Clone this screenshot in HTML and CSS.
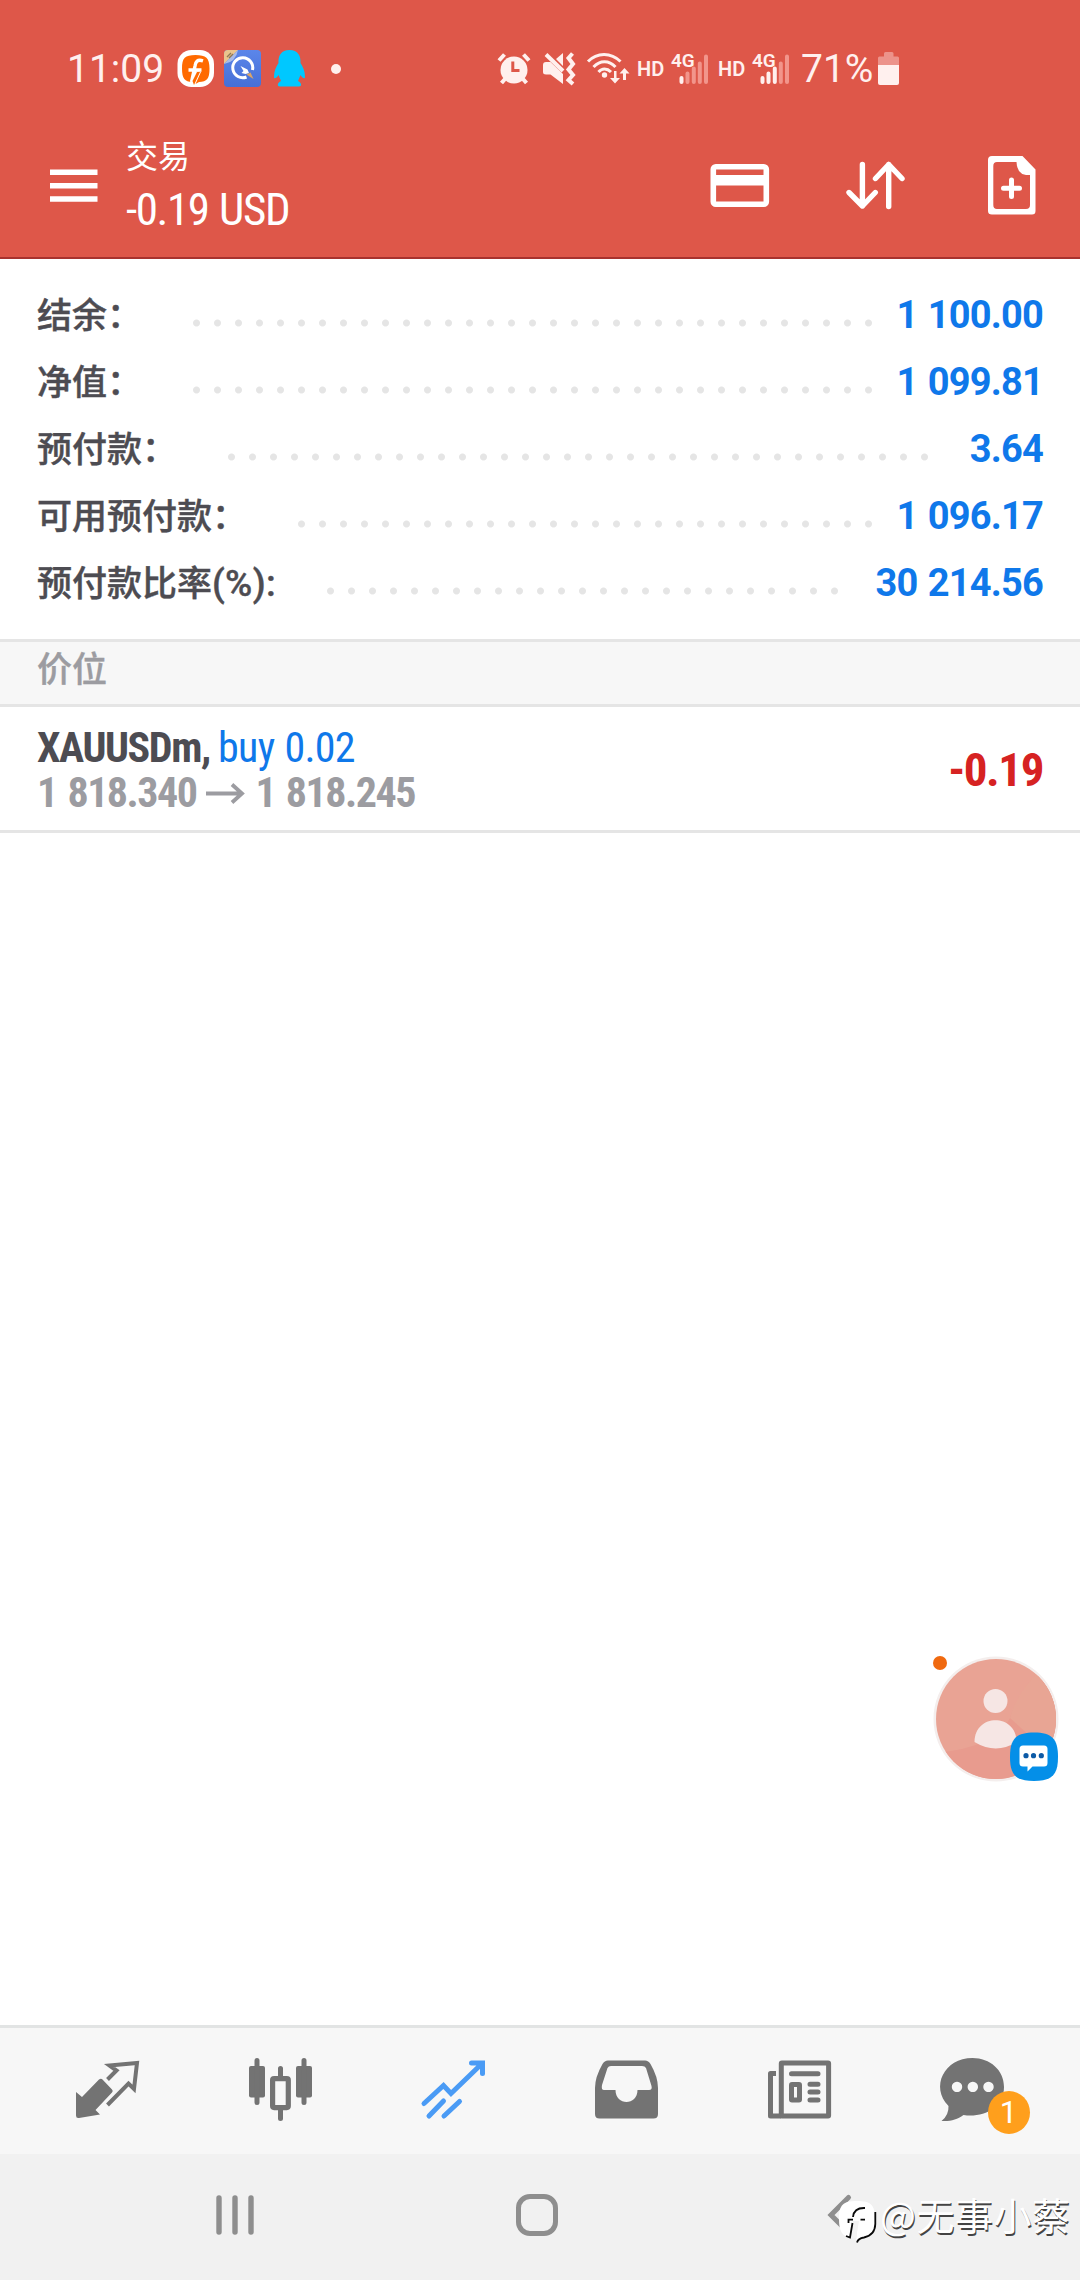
FILE: index.html
```html
<!DOCTYPE html>
<html lang="zh-CN">
<head>
<meta charset="utf-8">
<title>交易</title>
<link rel="stylesheet" href="styles.css">
</head>
<body>
<div class="screen">
  <div class="status">
    <span class="status-time">11:09</span>
    <svg class="st-follow" width="36" height="38" viewBox="178 50 36 38"><rect x="177.500" y="50" width="36.500" height="37" rx="14" fill="#fff"/><path d="M195.500 55C185 55 182 58 182 68.500S185 81.500 192 82L195 71L201 72L195.500 84L199 82C207 81.500 209.500 79 209.500 68.500S206 55 195.500 55Z" fill="#ff6a00"/><path d="M203 60.800C197.500 59 195.500 61.500 195 66L191.500 82M188.500 70H201.500" fill="none" stroke="#fff" stroke-width="3.400"/><path d="M197 72H200L194 85L192.500 81Z" fill="#ff6a00"/></svg>
    <svg class="st-search" width="37" height="37" viewBox="224 50 37 37"><defs><linearGradient id="g1" x2="0" y2="1"><stop stop-color="#5b86ea"/><stop offset="1" stop-color="#466fd6"/></linearGradient></defs><rect x="224" y="50" width="37" height="37" rx="4" fill="url(#g1)"/><path d="M224 64V54Q224 50 228 50H238Z" fill="#eac48c"/><path d="M224 64L238 50Q236 62 224 64Z" fill="#a9bbe8"/><path d="M227 57L231 53M229 58L233 54" stroke="#8f7855" stroke-width="1.300"/><path d="M246.500 77A10 10 0 1 1 252.500 70" fill="none" stroke="#fff" stroke-width="3"/><path d="M240.500 66L247.500 69.500L249 73L245.500 74L241.500 73L243.500 71Z" fill="#fff"/><path d="M246.500 74.500L250.500 72.500L253.500 79Z" fill="#dca566"/></svg>
    <svg class="st-qq" width="34" height="38" viewBox="273 50 34 38"><path d="M289.500 50C281 50 278 56 278.500 63C276 67 274 71 274 77C274 79 276 79 278.500 75L281 81C277 83 277 86.500 280 86.500H299C302 86.500 302 83 298 81L300.500 75C303 79 305 79 305 77C305 71 303 67 300.500 63C301 56 298 50 289.500 50Z" fill="#00c8ff"/></svg>
    <span class="st-dot"></span>
    <svg class="st-alarm" width="36" height="34" viewBox="496 52 36 34"><circle cx="514" cy="70" r="13.500" class="sf"/><path d="M499 60.500L504.500 54.500M529 60.500L523.500 54.500M505 79L501.500 83M523 79L526.500 83" class="ss"/><path d="M512.800 61.500V70.500H519.500" fill="none" stroke="#de5749" stroke-width="3"/></svg>
    <svg class="st-mute" width="34" height="34" viewBox="542 52 34 34"><path d="M543 65Q543 62 546 62H550.500L563 74V84L550.500 74.500H546Q543 74.500 543 72ZM556 59L563 53V66Z" class="sf"/><path d="M546 54.500L563 71" class="ss"/><path d="M572.500 53.500L568.500 58L573 64L568.500 69.500L573 75L568.500 80L573 84" class="ss"/></svg>
    <svg class="st-wifi" width="43" height="34" viewBox="587 52 43 34"><path d="M588 61.500C597 52 611 52 620.500 61.500M593.500 67C600 60 609 60 615.500 67M598.500 72C602 68 607 68 611 72" fill="none" stroke="#fff0ee" stroke-width="3"/><circle cx="604.500" cy="75" r="2.700" class="sf"/><path d="M614 71V78H610L615 83.500L620 78H616.500V71ZM623 80V73.500H619.500L624.500 68L629.500 73.500H626V80Z" class="sf"/></svg>
    <span class="hd hd-a">HD</span>
    <span class="signal sig-a"><span class="gen">4G</span><svg width="38" height="34" viewBox="671 52 38 34"><path d="M681.500 78V82" class="bar"/><path d="M687.500 73.500V82M693.800 68.500V82M699.800 63.500V82M706 56.500V82" class="bar dim"/></svg></span>
    <span class="hd hd-b">HD</span>
    <span class="signal sig-b"><span class="gen">4G</span><svg width="38" height="34" viewBox="671 52 38 34"><path d="M681.500 78V82M687.500 73.500V82M693.800 68.500V82" class="bar"/><path d="M699.800 63.500V82M706 56.500V82" class="bar dim"/></svg></span>
    <span class="pct">71%</span>
    <svg class="st-batt" width="21" height="33" viewBox="879 51 21 33"><path d="M879 64V57Q879 55.500 880.500 55.500H885V52.500Q885 51 886.500 51H893Q894.500 51 894.500 52.500V55.500H898.500Q900 55.500 900 57V64Z" fill="#ec938b"/><path d="M879 64H900V82Q900 84 898 84H881Q879 84 879 82Z" class="sf"/></svg>
  </div>

  <header class="appbar">
    <svg class="menu" width="48" height="34" viewBox="50 169 48 34"><path d="M50 172.300H97.500M50 185.800H97.500M50 199H97.500" stroke="#fff" stroke-width="5.600"/></svg>
    <div class="heading"><div class="title">交易</div><div class="total">-0.19 USD</div></div>
    <svg class="ab-card" width="60" height="44" viewBox="710 164 60 44"><rect x="713.300" y="166.800" width="53" height="37.500" rx="2.500" fill="none" stroke="#fff" stroke-width="5.600"/><path d="M713 180.300H767" stroke="#fff" stroke-width="10.500"/></svg>
    <svg class="ab-sort" width="60" height="50" viewBox="846 161 60 50"><path d="M862.400 164.500V206M849 192.500L862.400 206L875.300 192.500M888.700 206.500V164.500M875.500 178.500L888.700 164.500L902 178.500" fill="none" stroke="#fff" stroke-width="5.400" stroke-linecap="round" stroke-linejoin="round"/></svg>
    <svg class="ab-doc" width="48" height="59" viewBox="988 156 48 59"><path fill-rule="evenodd" d="M992 156H1022.500L1035.500 169.500V211Q1035.500 214.500 1032 214.500H992Q988 214.500 988 211V160Q988 156 992 156ZM997 162Q993.300 162 993.300 166V205Q993.300 209 997 209H1026Q1030 209 1030 205V175H1026Q1017 174 1016.500 162Z" fill="#fff"/><path d="M1003.500 188.200H1019.500M1011.500 180V196.500" stroke="#fff" stroke-width="5" stroke-linecap="round"/></svg>
  </header>

  <section class="summary">
    <div class="row"><span class="label">结余：</span><i class="dots" style="--n:33"></i><span class="value">1 100.00</span></div>
    <div class="row"><span class="label">净值：</span><i class="dots" style="--n:33"></i><span class="value">1 099.81</span></div>
    <div class="row"><span class="label">预付款：</span><i class="dots" style="--n:34"></i><span class="value">3.64</span></div>
    <div class="row"><span class="label">可用预付款：</span><i class="dots" style="--n:28"></i><span class="value">1 096.17</span></div>
    <div class="row"><span class="label">预付款比率<span class="latin">(%):</span></span><i class="dots" style="--n:25"></i><span class="value">30 214.56</span></div>
  </section>

  <div class="section-head">价位</div>

  <div class="position">
    <div class="pos-main">
      <div class="symbol"><b>XAUUSDm,</b> <span class="side">buy 0.02</span></div>
      <div class="prices"><span>1 818.340</span><svg class="arrow" width="39" height="22" viewBox="207 780 39 22"><path d="M207 791.500H243M233 782.500L243 791.500L233 800.500" fill="none" stroke="#9c9ca1" stroke-width="3.800"/></svg><span>1 818.245</span></div>
    </div>
    <div class="profit">-0.19</div>
  </div>

  <main class="empty"></main>

  <nav class="tabs">
    <svg width="64" height="64" viewBox="76 2058 64 64"><path d="M76 2092L82 2097L99 2079.500Q101 2078 102.500 2079.500L112 2089.500Q113.500 2091 112 2092.500L95.500 2110L100 2114.500L79 2118Q76 2118.500 76 2115.500Z" class="g"/><path d="M107.500 2079.500L116.500 2070.500L109.500 2065.500L137 2063L134 2089L128.500 2083.500L107.500 2105" fill="none" stroke="#737373" stroke-width="4"/></svg>
    <svg width="64" height="64" viewBox="249 2058 64 64"><rect x="249" y="2066" width="16" height="31.500" rx="2" class="g"/><rect x="296" y="2066" width="16" height="31.500" rx="2" class="g"/><path d="M257 2060.500V2102.500M304 2060.500V2102.500M280.500 2068.500V2078M280.500 2110V2118.500" stroke="#737373" stroke-width="5" stroke-linecap="round"/><rect x="272.600" y="2078.600" width="15.700" height="29" rx="1.500" fill="none" stroke="#737373" stroke-width="5.200"/></svg>
    <svg width="64" height="64" viewBox="422 2058 64 64"><path d="M424 2103.500L443.500 2085.500L451 2093.500L481 2064.500M471.500 2063H482.500V2073.500M443.500 2101L429 2116M459.500 2101.500L444 2116" fill="none" stroke="#4a9bf5" stroke-width="5" stroke-linecap="round"/><path d="M475 2061H485V2071Z" fill="#4a9bf5"/></svg>
    <svg width="64" height="64" viewBox="595 2058 64 64"><path fill-rule="evenodd" d="M608 2060.500H645Q648.500 2060.500 650.500 2064Q658 2077 658 2088V2114Q658 2118.500 653.500 2118.500H599.500Q595 2118.500 595 2114V2088Q595 2077 602.500 2064Q604.500 2060.500 608 2060.500ZM611 2066Q608.500 2066 607.500 2068L602 2085Q601 2090 604 2090H615.500C615.500 2106 637.500 2106 637.500 2090H649Q652.500 2090 651.500 2086L646 2068Q645 2066 642 2066Z" class="g"/></svg>
    <svg width="64" height="64" viewBox="768 2058 64 64"><rect x="781.300" y="2063" width="47.300" height="53" rx=".500" fill="none" stroke="#737373" stroke-width="5"/><path d="M776 2073.500H770.500V2116H781" fill="none" stroke="#737373" stroke-width="5" stroke-linejoin="round"/><path d="M791.500 2073.700H818M810 2084.200H818M810 2092H818M810 2100H818" stroke="#737373" stroke-width="5" stroke-linecap="round"/><rect x="791.500" y="2084.500" width="8" height="15.500" rx=".500" fill="none" stroke="#737373" stroke-width="5"/></svg>
    <div class="chat">
      <svg width="64" height="64" viewBox="941 2058 64 64"><path fill-rule="evenodd" d="M972.500 2058C990 2058 1004 2070 1004 2087C1004 2108 983 2118 963.500 2115C957 2119.500 951 2121.500 941.500 2121Q949 2115 948.500 2106C930 2087 944 2058 972.500 2058ZM957 2081.700a5.200 5.200 0 1 0 .01 0ZM972.800 2081.700a5.200 5.200 0 1 0 .01 0ZM988.500 2081.700a5.200 5.200 0 1 0 .01 0Z" class="g"/></svg>
      <span class="badge">1</span>
    </div>
  </nav>

  <div class="sysnav">
    <svg class="recents" width="38" height="40" viewBox="216 2195 38 40"><path d="M219 2198V2232M235 2198V2232M251 2198V2232" stroke="#8e8e8e" stroke-width="5.400" stroke-linecap="round"/></svg>
    <span class="home"></span>
    <svg class="back" width="24" height="42" viewBox="828 2194 24 42"><path d="M848.500 2197.500L831 2215L848.500 2232.500" fill="none" stroke="#8e8e8e" stroke-width="5" stroke-linecap="round"/></svg>
  </div>

  <div class="bubble">
    <svg width="124" height="132" viewBox="934 1654 124 132"><defs><clipPath id="av"><circle cx="996" cy="1719" r="60"/></clipPath></defs><circle cx="996" cy="1719" r="62.500" fill="#f4eeed"/><g clip-path="url(#av)"><rect x="934" y="1656" width="124" height="126" fill="#e9a394"/><path d="M1058 1660Q1018 1690 1010 1718Q996 1748 934 1753V1790H1058Z" fill="#e89b8e"/><path d="M1058 1656Q1018 1685 1010 1718L1040 1745H1058Z" fill="#e8a594"/></g><circle cx="995.500" cy="1701" r="12" fill="#f6e6e4"/><path d="M974.500 1742C974.500 1713 1016.500 1713 1016.500 1742Q996 1755 974.500 1742Z" fill="#f6e6e4"/><circle cx="940" cy="1663" r="7" fill="#f0690f"/><path d="M1034 1732.500C1052 1732.500 1058 1739 1058 1757S1052 1781 1034 1781S1010 1775 1010 1757S1016 1732.500 1034 1732.500Z" fill="#048fe8"/><path d="M1023 1745.500H1044Q1047.500 1745.500 1047.500 1749V1763Q1047.500 1766.500 1044 1766.500H1032.500L1027.500 1771.500V1766.500H1023Q1019.500 1766.500 1019.500 1763V1749Q1019.500 1745.500 1023 1745.500Z" fill="#fff"/><g fill="#0c5aa6"><circle cx="1026" cy="1755.700" r="2.600"/><circle cx="1033.500" cy="1755.700" r="2.600"/><circle cx="1041.300" cy="1755.700" r="2.600"/></g></svg>
  </div>

  <div class="watermark">
    <svg width="40" height="46" viewBox="837 2199 40 46"><path d="M857 2201C843 2201 839 2205 839 2219C839 2231 842 2236 850 2237.500L853 2221H858L856 2243C858 2239 861 2238 864 2237.500C872 2236 875 2231 875 2219C875 2205 871 2201 857 2201Z" fill="#fff"/><path d="M853 2221H859L856 2238L850 2237.500Z" fill="#f4f4f4"/><path d="M853 2217Q854 2207.500 865 2208M848.500 2223V2219.700H853M860.500 2219.700H865M852.500 2223L850 2237.500L846 2236M875.300 2212V2224Q875 2235 864 2237.500Q858 2238.500 857 2242.500" fill="none" stroke="#0a0a0a" stroke-width="1.800"/></svg>
    <span>@无事小蔡</span>
  </div>
</div>
</body>
</html>
```
FILE: styles.css
```css
* { box-sizing: border-box; }
body {
  margin: 0;
  font-family: Roboto, "Noto Sans CJK SC", sans-serif;
  background: #fff;
}
svg { display: block; flex: none; overflow: visible; }
.screen {
  position: relative;
  width: 1080px;
  height: 2280px;
  display: flex;
  flex-direction: column;
  overflow: hidden;
}

/* status bar */
.status {
  height: 118px;
  flex: none;
  padding: 19px 0 0 67px;
  display: flex;
  align-items: center;
  background: #de5749;
  color: #fff0ee;
  line-height: 46px;
  white-space: nowrap;
}
.status > * { flex: none; }
.status-time { width: 97px; font-size: 39px; font-weight: 400; }
.sf { fill: #fff0ee; }
.ss { fill: none; stroke: #fff0ee; stroke-width: 4; }
.st-follow { margin-left: 14px; }
.st-search { margin-left: 10px; }
.st-qq { margin-left: 12px; }
.st-dot { width: 10px; height: 10px; border-radius: 50%; background: #fff0ee; margin-left: 24px; }
.st-alarm { margin-left: 155px; }
.st-mute { margin-left: 10px; }
.st-wifi { margin-left: 11px; }
.hd { width: 27px; font-size: 20px; font-weight: 600; }
.hd-a { margin-left: 7px; }
.hd-b { margin-left: 9px; }
.signal { position: relative; }
.sig-a { margin-left: 7px; }
.sig-b { margin-left: 7px; }
.gen { position: absolute; left: 0; top: 0; font-size: 19px; font-weight: 600; line-height: 18px; }
.bar { stroke: #fff0ee; stroke-width: 4; stroke-linecap: round; }
.bar.dim { stroke: #f2958b; }
.pct { margin-left: 11px; width: 72px; font-size: 39px; font-weight: 400; }
.st-batt { margin-left: 5px; }

/* app bar */
.appbar {
  height: 141px;
  flex: none;
  display: flex;
  align-items: flex-start;
  padding-left: 50px;
  background: #de5749;
  border-bottom: 2px solid #a8322e;
  color: #fff;
}
.menu { margin-top: 51px; }
.heading { width: 181px; margin: 17px 0 0 28px; white-space: nowrap; }
.title { font-size: 32px; line-height: 44px; }
.total { font-size: 45px; line-height: 54px; margin-top: 4px; font-stretch: 75%; letter-spacing: -1.4px; word-spacing: 1.5px; }
.ab-card { margin: 46px 0 0 403px; }
.ab-sort { margin: 43px 0 0 76px; }
.ab-doc { margin: 38px 0 0 82px; }

/* account summary */
.summary {
  height: 380px;
  flex: none;
  padding: 22px 37px 0;
}
.row { height: 67px; display: flex; align-items: center; white-space: nowrap; }
.label { margin-top: -4px; font-size: 35px; font-weight: 500; color: #4d4c52; -webkit-text-stroke: .4px #4d4c52; }
.latin { font-size: 37px; letter-spacing: .3px; line-height: 1; }
.dots {
  width: calc(var(--n) * 21px);
  height: 8px;
  margin: 17px 0 0 44px;
  background: radial-gradient(circle at center, #e5e5e5 3px, transparent 4px) 0 0 / 21px 8px repeat-x;
}
.value { margin-left: auto; font-size: 38px; font-weight: 700; letter-spacing: -.8px; word-spacing: 1.5px; color: #0f78ea; }

.section-head {
  height: 68px;
  flex: none;
  padding-left: 37px;
  border-top: 3px solid #e5e5e5;
  border-bottom: 3px solid #e5e5e5;
  background: #f7f7f7;
  color: #9c9ca1;
  font-size: 35px;
  font-weight: 500;
  line-height: 57px;
  -webkit-text-stroke: .4px #9c9ca1;
}

/* open position */
.position {
  height: 126px;
  flex: none;
  padding: 18px 37px 0;
  display: flex;
  justify-content: space-between;
  border-bottom: 3px solid #e5e5e5;
  font-stretch: 75%;
  white-space: nowrap;
}
.symbol { font-size: 42px; line-height: 46px; color: #4d4c52; letter-spacing: -1.4px; }
.side { color: #0f78ea; letter-spacing: -.7px; word-spacing: 1px; }
.prices { display: flex; align-items: center; gap: 10px; font-size: 42px; font-weight: 700; line-height: 44px; color: #9c9ca1; letter-spacing: -1.5px; word-spacing: 2.500px; }
.profit { font-size: 47px; font-weight: 700; line-height: 90px; color: #d62222; letter-spacing: -1.4px; }

.empty { flex: 1; }

/* bottom navigation */
.tabs {
  height: 129px;
  flex: none;
  display: grid;
  grid-template-columns: repeat(6, 173px);
  justify-content: center;
  justify-items: center;
  padding-top: 30px;
  border-top: 3px solid #e2e4e4;
  background: #f7f7f7;
}
.g { fill: #737373; }
.chat { position: relative; width: 64px; height: 64px; }
.badge {
  position: absolute;
  left: 47px;
  top: 33px;
  width: 42px;
  height: 43px;
  border-radius: 50%;
  background: #ff9f1c;
  color: #fff;
  font-size: 31px;
  line-height: 43px;
  text-align: center;
}

.sysnav {
  height: 126px;
  flex: none;
  display: flex;
  align-items: center;
  padding: 0 228px 4px 216px;
  background: #f1f1f1;
}
.home { width: 42px; height: 42px; margin-left: 262px; border: 5px solid #8e8e8e; border-radius: 14px; }
.back { margin-left: auto; }

.bubble { position: absolute; left: 934px; top: 1654px; }

.watermark {
  position: absolute;
  left: 837px;
  top: 2199px;
  display: flex;
  gap: 3px;
  color: #fff;
  font-family: "Noto Sans CJK SC", sans-serif;
  font-size: 38px;
  font-weight: 400;
  line-height: 30px;
  letter-spacing: .5px;
  text-shadow: 1px 1.500px .5px #444;
  white-space: nowrap;
}
```
